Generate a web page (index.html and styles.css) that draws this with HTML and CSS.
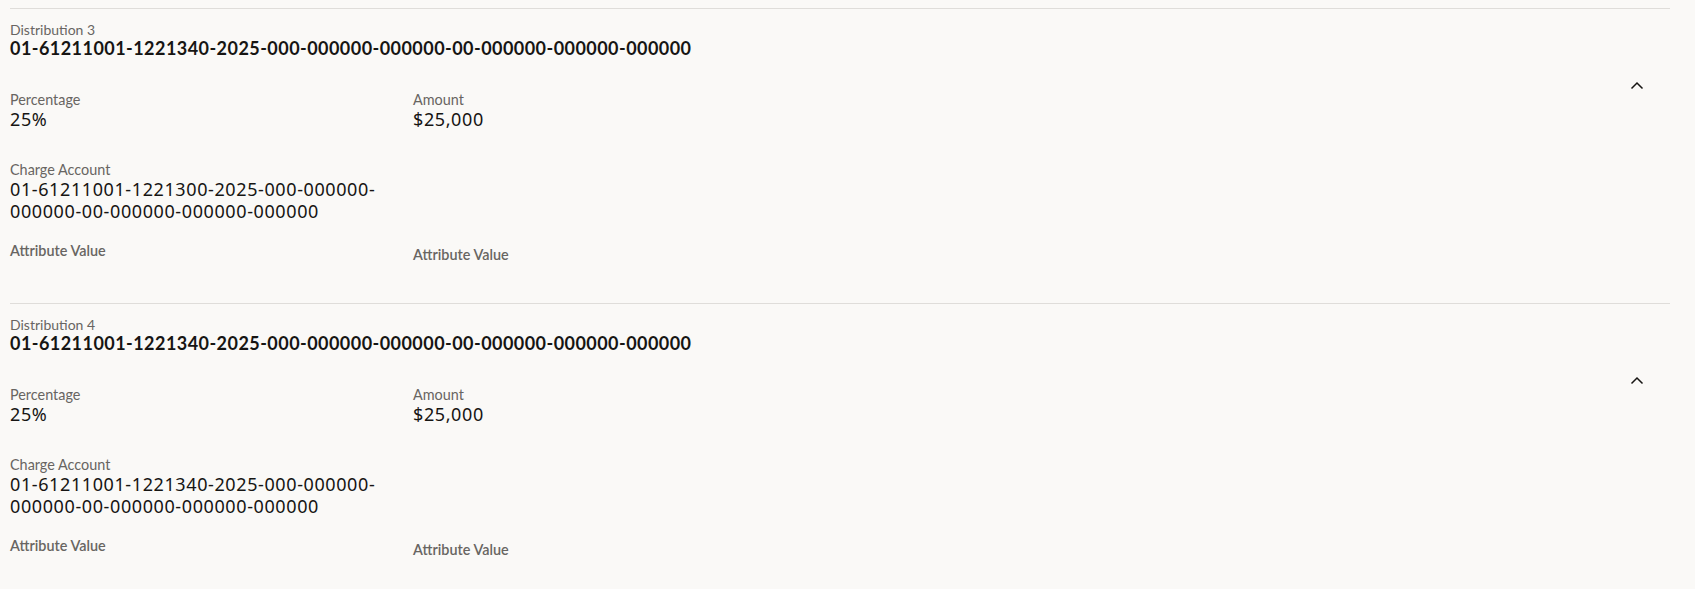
FILE: index.html
```html
<!DOCTYPE html>
<html lang="en">
  <head>
    <meta charset="UTF-8" />
    <meta name="viewport" content="width=device-width, initial-scale=1.0" />
    <title>Distributions</title>
    <link rel="stylesheet" href="styles.css">
  </head>
  <body>
    <div class="list">
      <section class="dist">
        <div class="dist-body">
          <div class="dist-title">Distribution 3</div>
          <div class="dist-account">01-61211001-1221340-2025-000-000000-000000-00-000000-000000-000000</div>
          <div class="fields">
            <div class="field">
              <div class="label">Percentage</div>
              <div class="value">25%</div>
            </div>
            <div class="field">
              <div class="label">Amount</div>
              <div class="value">$25,000</div>
            </div>
            <div class="field">
              <div class="label">Charge Account</div>
              <div class="value">01-<wbr>61211001-<wbr>1221300-<wbr>2025-<wbr>000-<wbr>000000-<wbr>000000-<wbr>00-<wbr>000000-<wbr>000000-<wbr>000000</div>
            </div>
          </div>
          <div class="attrs">
            <div class="label attr">Attribute Value</div>
            <div class="label attr attr-right">Attribute Value</div>
          </div>
        </div>
        <button class="toggle" aria-label="Collapse">
          <svg width="16" height="16" viewBox="0 0 16 16"><polyline points="2.5 10.5 8 5 13.5 10.5" /></svg>
        </button>
      </section>

      <section class="dist">
        <div class="dist-body">
          <div class="dist-title">Distribution 4</div>
          <div class="dist-account">01-61211001-1221340-2025-000-000000-000000-00-000000-000000-000000</div>
          <div class="fields">
            <div class="field">
              <div class="label">Percentage</div>
              <div class="value">25%</div>
            </div>
            <div class="field">
              <div class="label">Amount</div>
              <div class="value">$25,000</div>
            </div>
            <div class="field">
              <div class="label">Charge Account</div>
              <div class="value">01-<wbr>61211001-<wbr>1221340-<wbr>2025-<wbr>000-<wbr>000000-<wbr>000000-<wbr>00-<wbr>000000-<wbr>000000-<wbr>000000</div>
            </div>
          </div>
          <div class="attrs">
            <div class="label attr">Attribute Value</div>
            <div class="label attr attr-right">Attribute Value</div>
          </div>
        </div>
        <button class="toggle" aria-label="Collapse">
          <svg width="16" height="16" viewBox="0 0 16 16"><polyline points="2.5 10.5 8 5 13.5 10.5" /></svg>
        </button>
      </section>
    </div>
  </body>
</html>
```

FILE: styles.css
```css
:root {
  --bg: #faf9f7;
  --text: #161513;
  --muted: #686562;
  --line: #dfddda;
}

* {
  box-sizing: border-box;
  margin: 0;
  padding: 0;
}

body {
  background: var(--bg);
  color: var(--text);
  font-family: Lato, "Liberation Sans", sans-serif;
  padding: 8px 25px 0 10px;
}

.dist {
  display: flex;
  border-top: 1px solid var(--line);
  padding: 12px 17px 40px 0;
}

.dist-body {
  flex: 1;
}

.dist-title {
  font-size: 14px;
  line-height: 17px;
  color: var(--muted);
}

.dist-account {
  font-size: 18px;
  line-height: 20px;
  font-weight: 700;
  letter-spacing: 0.45px;
}

.fields {
  display: grid;
  grid-template-columns: 403px 403px;
  row-gap: 31px;
  margin-top: 33px;
}

.label {
  font-size: 14.4px;
  line-height: 17px;
  color: var(--muted);
}

.value {
  font-family: "Noto Sans", sans-serif;
  font-size: 18px;
  line-height: 22px;
  letter-spacing: 0.6px;
  padding-right: 16px;
}

.attrs {
  display: grid;
  grid-template-columns: 403px 403px;
  margin-top: 20px;
}

.attr {
  font-weight: 600;
}

.attr-right {
  padding-top: 4px;
}

.toggle {
  width: 32px;
  height: 32px;
  margin-top: 49px;
  border: none;
  background: none;
  display: flex;
  align-items: center;
  justify-content: center;
  cursor: pointer;
}

.toggle svg {
  fill: none;
  stroke: var(--text);
  stroke-width: 1.5;
}
```
